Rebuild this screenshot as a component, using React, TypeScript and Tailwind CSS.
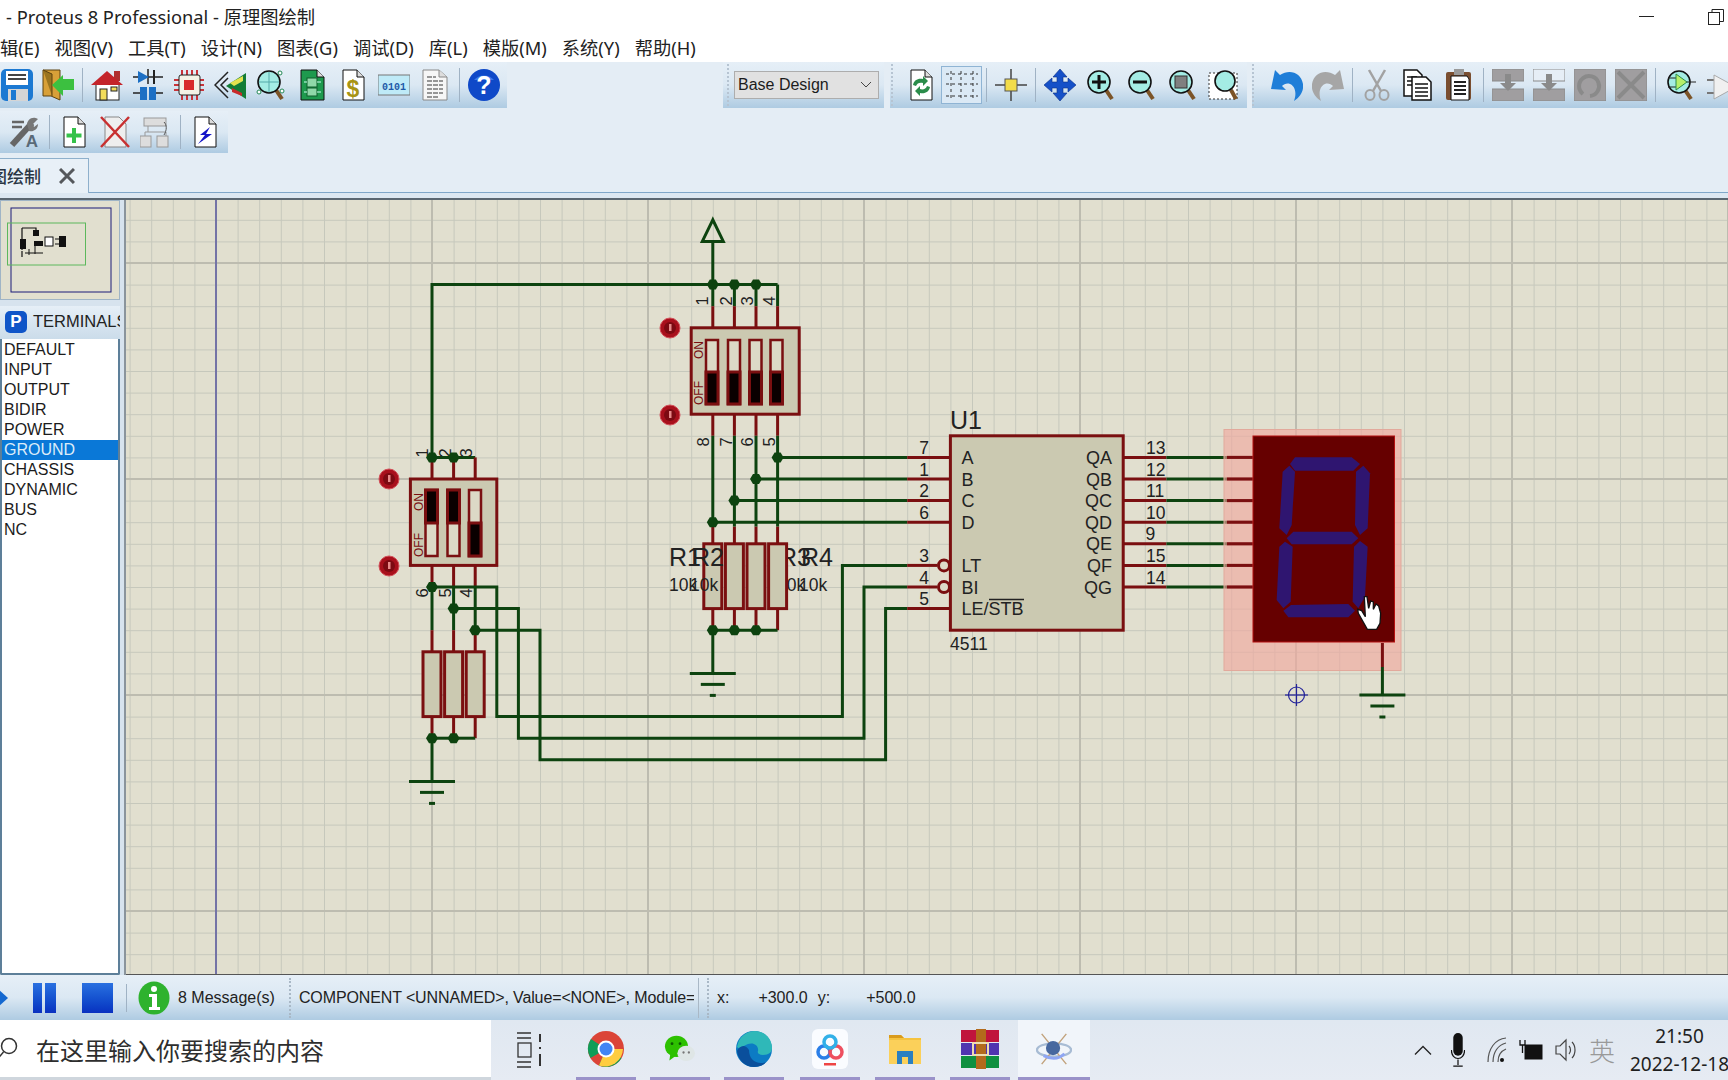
import type { ReactNode } from "react";

const gx = (i: number) => i * 21.6;
const gy = (j: number) => 3.8 + j * 21.6;

const GREEN = "#0d430f";
const RED = "#7a0f10";
const BODY = "#cbc9b1";

type Pt = [number, number];

function Wire({ p, c = GREEN, w = 3 }: { p: Pt[]; c?: string; w?: number }) {
  return (
    <polyline
      points={p.map(([x, y]) => `${gx(x)},${gy(y)}`).join(" ")}
      fill="none"
      stroke={c}
      strokeWidth={w}
    />
  );
}

function Dot({ x, y }: { x: number; y: number }) {
  const cx = gx(x);
  const cy = gy(y);
  return (
    <polygon
      points={`${cx - 6},${cy} ${cx - 3},${cy - 5} ${cx + 3},${cy - 5} ${cx + 6},${cy} ${cx + 3},${cy + 5} ${cx - 3},${cy + 5}`}
      fill={GREEN}
    />
  );
}

function Ground({ x, y }: { x: number; y: number }) {
  const cx = gx(x);
  const cy = gy(y);
  return (
    <g stroke={GREEN} strokeWidth={3}>
      <line x1={cx - 23} x2={cx + 23} y1={cy} y2={cy} />
      <line x1={cx - 12} x2={cx + 12} y1={cy + 11} y2={cy + 11} />
      <line x1={cx - 3} x2={cx + 3} y1={cy + 22} y2={cy + 22} />
    </g>
  );
}

function Resistor({ x, top, bottom }: { x: number; top: number; bottom: number }) {
  return (
    <rect
      x={gx(x) - 9}
      y={gy(top)}
      width={18}
      height={gy(bottom) - gy(top)}
      fill={BODY}
      stroke={RED}
      strokeWidth={3}
    />
  );
}

function Slide({ x, top, bottom, on }: { x: number; top: number; bottom: number; on: boolean }) {
  const mid = (top + bottom) / 2;
  return (
    <g>
      <rect x={x - 6} y={top} width={12} height={bottom - top} fill="#dcd9c6" stroke={RED} strokeWidth={2.5} />
      <rect
        x={x - 6}
        y={on ? top : mid}
        width={12}
        height={(bottom - top) / 2}
        fill="#0a0000"
        stroke={RED}
        strokeWidth={3}
      />
    </g>
  );
}

function Probe({ x, y }: { x: number; y: number }) {
  return (
    <g>
      <circle cx={x} cy={y} r={10} fill="#a8101c" stroke="#d3505a" strokeWidth={1} />
      <circle cx={x} cy={y} r={6} fill="#7c0a12" />
      <path d={`M${x - 1} ${y - 4}h2.5v7h-2.5z`} fill="#e88a8a" />
    </g>
  );
}

function VText({ x, y, size = 16.5, fill = "#222", children }: { x: number; y: number; size?: number; fill?: string; children: ReactNode }) {
  return (
    <text x={x} y={y} fontSize={size} fill={fill} textAnchor="middle" transform={`rotate(-90 ${x} ${y})`}>
      {children}
    </text>
  );
}

function Schematic() {
  const leftLabels: [string, number, string][] = [
    ["7", 21, "A"],
    ["1", 22, "B"],
    ["2", 23, "C"],
    ["6", 24, "D"],
    ["3", 26, "LT"],
    ["4", 27, "BI"],
    ["5", 28, "LE/STB"],
  ];
  const rightLabels: [string, number, string][] = [
    ["13", 21, "QA"],
    ["12", 22, "QB"],
    ["11", 23, "QC"],
    ["10", 24, "QD"],
    ["9", 25, "QE"],
    ["15", 26, "QF"],
    ["14", 27, "QG"],
  ];

  return (
    <svg width={1602} height={774} viewBox="126 200 1602 774" className="block">
      <defs>
        <pattern id="minor" x={0} y={3.8} width={21.6} height={21.6} patternUnits="userSpaceOnUse">
          <rect width={1} height={21.6} fill="#c6c8bc" />
          <rect width={21.6} height={1} fill="#c6c8bc" />
        </pattern>
        <pattern id="major" x={-1} y={46} width={216} height={216} patternUnits="userSpaceOnUse">
          <rect width={2} height={216} fill="#bdbcb0" />
          <rect width={216} height={2} fill="#bdbcb0" />
        </pattern>
      </defs>
      <rect x={126} y={200} width={1602} height={774} fill="#e1dfcf" />
      <rect x={126} y={200} width={1602} height={774} fill="url(#minor)" />
      <rect x={126} y={200} width={1602} height={774} fill="url(#major)" />
      <line x1={216} x2={216} y1={200} y2={974} stroke="#2a2a9c" strokeWidth={1} />

      {/* power terminal and top rail */}
      <polygon
        points={`${gx(33)},${gy(10)} ${gx(33) - 10.5},${gy(11)} ${gx(33) + 10.5},${gy(11)}`}
        fill="none"
        stroke={GREEN}
        strokeWidth={3}
      />
      <Wire p={[[33, 11], [33, 13]]} />
      <Wire p={[[20, 21], [20, 13], [36, 13]]} />

      {/* right DIP pins */}
      {[33, 34, 35, 36].map((x) => (
        <g key={x}>
          <Wire p={[[x, 13], [x, 14]]} />
          <Wire p={[[x, 14], [x, 15]]} c={RED} />
          <Wire p={[[x, 19], [x, 20]]} c={RED} />
          <Wire p={[[x, 28], [x, 29]]} c={RED} />
          <Wire p={[[x, 24.2], [x, 25]]} c={RED} />
        </g>
      ))}
      <Wire p={[[36, 20], [36, 24.2]]} />
      <Wire p={[[35, 20], [35, 24.2]]} />
      <Wire p={[[34, 20], [34, 24.2]]} />
      <Wire p={[[33, 20], [33, 24.2]]} />
      <Wire p={[[33, 29], [36, 29]]} />
      <Wire p={[[33, 29], [33, 31]]} />
      <Ground x={33} y={31} />

      {/* horizontal buses into U1 */}
      <Wire p={[[36, 21], [42, 21]]} />
      <Wire p={[[35, 22], [42, 22]]} />
      <Wire p={[[34, 23], [42, 23]]} />
      <Wire p={[[33, 24], [42, 24]]} />

      {/* left DIP pins */}
      <Wire p={[[20, 21], [22, 21]]} />
      {[20, 21, 22].map((x) => (
        <g key={x}>
          <Wire p={[[x, 21], [x, 22]]} c={RED} />
          <Wire p={[[x, 26], [x, 27]]} c={RED} />
          <Wire p={[[x, 27], [x, 29]]} />
          <Wire p={[[x, 29], [x, 30]]} c={RED} />
          <Wire p={[[x, 33], [x, 34]]} c={RED} />
        </g>
      ))}
      <Wire p={[[20, 34], [21, 34]]} />
      <Wire p={[[21, 34], [22, 34]]} />
      <Wire p={[[20, 34], [20, 36]]} />
      <Ground x={20} y={36} />

      {/* long return wires */}
      <Wire p={[[20, 27], [23, 27], [23, 33], [39, 33], [39, 26], [42, 26]]} />
      <Wire p={[[21, 28], [24, 28], [24, 34], [40, 34], [40, 27], [42, 27]]} />
      <Wire p={[[22, 29], [25, 29], [25, 35], [41, 35], [41, 28], [42, 28]]} />

      {/* U1 pins */}
      {[21, 22, 23, 24, 28].map((j) => (
        <Wire key={j} p={[[42, j], [44, j]]} c={RED} />
      ))}
      {[26, 27].map((j) => (
        <Wire key={j} p={[[42, j], [43.4, j]]} c={RED} />
      ))}
      {[21, 22, 23, 24, 25, 26, 27].map((j) => (
        <g key={j}>
          <Wire p={[[52, j], [54, j]]} c={RED} />
          <Wire p={[[54, j], [56.8, j]]} />
          <Wire p={[[56.8, j], [58, j]]} c={RED} />
        </g>
      ))}

      {/* 4 resistors */}
      <text x={669} y={566} fontSize={25} fill="#222">R1</text>
      <text x={669} y={591} fontSize={17.5} fill="#222">10k</text>
      <Resistor x={33} top={25} bottom={28} />
      <text x={692} y={566} fontSize={25} fill="#222">R2</text>
      <text x={690} y={591} fontSize={17.5} fill="#222">10k</text>
      <Resistor x={34} top={25} bottom={28} />
      <Resistor x={35} top={25} bottom={28} />
      <text x={779} y={566} fontSize={25} fill="#222">R3</text>
      <text x={777} y={591} fontSize={17.5} fill="#222">10k</text>
      <Resistor x={36} top={25} bottom={28} />
      <text x={801} y={566} fontSize={25} fill="#222">R4</text>
      <text x={799} y={591} fontSize={17.5} fill="#222">10k</text>

      {/* left resistors */}
      <Resistor x={20} top={30} bottom={33} />
      <Resistor x={21} top={30} bottom={33} />
      <Resistor x={22} top={30} bottom={33} />

      {/* right DIP body */}
      <rect x={gx(32)} y={gy(15)} width={gx(5)} height={gy(19) - gy(15)} fill={BODY} stroke={RED} strokeWidth={3} />
      <Slide x={712} top={340} bottom={404} on={false} />
      <Slide x={734} top={340} bottom={404} on={false} />
      <Slide x={755.5} top={340} bottom={404} on={false} />
      <Slide x={776.5} top={340} bottom={404} on={false} />
      <VText x={703} y={350} size={12} fill={RED}>ON</VText>
      <VText x={703} y={393} size={12} fill={RED}>OFF</VText>
      <VText x={708} y={301}>1</VText>
      <VText x={731.5} y={301}>2</VText>
      <VText x={752.5} y={301}>3</VText>
      <VText x={775} y={301}>4</VText>
      <VText x={708.5} y={442}>8</VText>
      <VText x={731.5} y={442}>7</VText>
      <VText x={753} y={442}>6</VText>
      <VText x={775} y={442}>5</VText>
      <Probe x={670} y={328} />
      <Probe x={670} y={415} />

      {/* left DIP body */}
      <rect x={gx(19)} y={gy(22)} width={gx(4)} height={gy(26) - gy(22)} fill={BODY} stroke={RED} strokeWidth={3} />
      <Slide x={431.5} top={490} bottom={556} on />
      <Slide x={453.5} top={490} bottom={556} on />
      <Slide x={475} top={490} bottom={556} on={false} />
      <VText x={422.5} y={502} size={12} fill={RED}>ON</VText>
      <VText x={422.5} y={545} size={12} fill={RED}>OFF</VText>
      <VText x={428} y={453}>1</VText>
      <VText x={450.5} y={453}>2</VText>
      <VText x={471.5} y={453}>3</VText>
      <VText x={428} y={593}>6</VText>
      <VText x={450.5} y={593}>5</VText>
      <VText x={471.5} y={593}>4</VText>
      <Probe x={389} y={479} />
      <Probe x={389} y={566} />

      {/* junction dots */}
      {[33, 34, 35].map((x) => (
        <Dot key={x} x={x} y={13} />
      ))}
      {[33, 34, 35].map((x) => (
        <Dot key={x} x={x} y={29} />
      ))}
      <Dot x={36} y={21} />
      <Dot x={35} y={22} />
      <Dot x={34} y={23} />
      <Dot x={33} y={24} />
      <Dot x={20} y={21} />
      <Dot x={21} y={21} />
      <Dot x={20} y={27} />
      <Dot x={21} y={28} />
      <Dot x={22} y={29} />
      <Dot x={20} y={34} />
      <Dot x={21} y={34} />

      {/* U1 */}
      <text x={950} y={429} fontSize={25} fill="#222">U1</text>
      <rect x={gx(44)} y={gy(20)} width={gx(8)} height={gy(29) - gy(20)} fill={BODY} stroke={RED} strokeWidth={3} />
      <circle cx={944} cy={gy(26)} r={5.5} fill="#dddbc8" stroke={RED} strokeWidth={3} />
      <circle cx={944} cy={gy(27)} r={5.5} fill="#dddbc8" stroke={RED} strokeWidth={3} />
      {leftLabels.map(([n, j, l]) => (
        <g key={l}>
          <text x={924} y={gy(j) - 3.5} fontSize={17.5} fill="#222" textAnchor="middle">{n}</text>
          <text x={961.5} y={gy(j) + 6.5} fontSize={18} fill="#222">{l}</text>
        </g>
      ))}
      <line x1={989} x2={1024} y1={599.5} y2={599.5} stroke="#222" strokeWidth={1.5} />
      {rightLabels.map(([n, j, l]) => (
        <g key={l}>
          <text x={n === "9" ? 1145.5 : 1146} y={gy(j) - 3.5} fontSize={17.5} fill="#222">{n}</text>
          <text x={1112} y={gy(j) + 6.5} fontSize={18} fill="#222" textAnchor="end">{l}</text>
        </g>
      ))}
      <text x={950} y={650} fontSize={17.5} fill="#222">4511</text>

      {/* seven segment */}
      <rect x={1224} y={429.5} width={177} height={241} fill="#f0a99f" fillOpacity={0.65} stroke="#e2a99c" />
      {[21, 22, 23, 24, 25, 26, 27].map((j) => (
        <Wire key={j} p={[[56.8, j], [58, j]]} c={RED} />
      ))}
      <rect x={1253} y={436} width={141.5} height={206} fill="#660000" stroke="#b51010" strokeWidth={1} />
      <g transform="translate(930 400) scale(0.33333)" fill="#2f1570">
        <polygon points="1095,172 1265,172 1290,192 1270,212 1095,212 1080,192" />
        <polygon points="1058,215 1078,197 1095,215 1085,375 1070,405 1048,385" />
        <polygon points="1278,215 1300,197 1320,220 1313,385 1290,405 1275,375" />
        <polygon points="1090,395 1265,395 1285,415 1265,433 1085,433 1070,415" />
        <polygon points="1048,440 1065,425 1088,440 1082,605 1060,625 1040,600" />
        <polygon points="1272,440 1290,423 1313,440 1305,590 1285,625 1268,605" />
        <polygon points="1083,615 1255,612 1275,632 1255,652 1075,652 1060,632" />
        <path
          d="M1303 590 L1311 590 L1316 625 L1322 603 L1330 606 L1330 628 L1338 612 L1346 618 L1352 640 L1350 670 L1340 688 L1312 688 L1285 640 L1283 628 L1295 632 L1306 650 Z"
          fill="#fff"
          stroke="#111"
          strokeWidth={4}
        />
      </g>
      <line x1={gx(64)} x2={gx(64)} y1={643} y2={667} stroke={RED} strokeWidth={3} />
      <line x1={gx(64)} x2={gx(64)} y1={667} y2={gy(32)} stroke={GREEN} strokeWidth={3} />
      <Ground x={64} y={32} />

      {/* origin marker */}
      <g stroke="#23239a" strokeWidth={1.2} fill="none">
        <circle cx={1296.5} cy={695} r={8} />
        <line x1={1285} x2={1308} y1={695} y2={695} />
        <line x1={1296.5} x2={1296.5} y1={684} y2={706} />
      </g>
    </svg>
  );
}

/* toolbar icons */

function Ico({ children, w = 32 }: { children: ReactNode; w?: number }) {
  return (
    <svg width={w} height={32} viewBox={`0 0 ${w} 32`} className="block">
      {children}
    </svg>
  );
}

const Sheet = ({ fill = "#fff" }: { fill?: string }) => (
  <>
    <path d="M6 1h14l7 7v23H6z" fill={fill} stroke="#111" strokeWidth={1} />
    <path d="M20 1v7h7" fill="#ddd" stroke="#111" strokeWidth={1} />
  </>
);

const Lens = ({ fill = "#a4ece4" }: { fill?: string }) => (
  <>
    <path d="M21 21l6 9" stroke="#7c5427" strokeWidth={4} />
    <circle cx={14} cy={13} r={11} fill={fill} stroke="#111" strokeWidth={1.6} />
  </>
);

const icons: Record<string, ReactNode> = {
  save: (
    <Ico>
      <rect x={0} y={0} width={32} height={32} rx={5} fill="#1c79d2" />
      <rect x={5} y={2} width={22} height={14} fill="#fff" />
      <path d="M7 6h18M7 10h18" stroke="#444" strokeWidth={2} />
      <rect x={7} y={20} width={20} height={12} fill="#d5d5d5" />
      <rect x={10} y={21} width={5} height={10} fill="#1c79d2" />
    </Ico>
  ),
  exit: (
    <Ico>
      <path d="M1 1h17v30l-9-4H1z" fill="#d8a038" stroke="#5c4210" />
      <path d="M1 1l9 4v22" fill="#9a7420" stroke="#5c4210" />
      <path d="M32 10v11H21v6L10 16l11-10v4z" fill="#3cc040" />
    </Ico>
  ),
  home: (
    <Ico>
      <rect x={23} y={2} width={6} height={10} fill="#b03030" />
      <rect x={5} y={15} width={23} height={16} fill="#fff" stroke="#222" />
      <path d="M0 16L16 2l16 14z" fill="#c4242a" />
      <rect x={9} y={20} width={7} height={11} fill="#f2dc5a" stroke="#222" />
      <rect x={20} y={18} width={6} height={4} fill="#f2dc5a" stroke="#222" />
    </Ico>
  ),
  parts: (
    <Ico>
      <path d="M1 8h30M16 0v15M1 24h12M19 24h12" stroke="#222" strokeWidth={1.5} fill="none" />
      <path d="M6 2l11 6-11 6z" fill="#1c6fc4" />
      <rect x={21} y={1} width={2} height={14} fill="#222" />
      <rect x={8} y={18} width={7} height={13} fill="#1c6fc4" />
      <rect x={17} y={18} width={7} height={13} fill="#1c6fc4" />
    </Ico>
  ),
  chip: (
    <Ico>
      <path d="M9 1v6M14 1v6M19 1v6M24 1v6M9 25v6M14 25v6M19 25v6M24 25v6M1 11h6M1 16h6M1 21h6M25 11h6M25 16h6M25 21h6" stroke="#c8343a" strokeWidth={2} />
      <rect x={6} y={6} width={21} height={20} rx={2} fill="#f4f2e6" stroke="#222" />
      <rect x={11} y={11} width={10} height={10} fill="#d82a2a" />
    </Ico>
  ),
  eye: (
    <Ico>
      <path d="M14 3L1 16l13 13M14 9L7 16l7 7" fill="none" stroke="#222" strokeWidth={1.5} />
      <path d="M32 4v26L12 17z" fill="#137c36" />
      <path d="M16 14l13-7v5l-9 5z" fill="#e4e24e" />
      <path d="M18 19l10 5v3l-10-4z" fill="#c92a2a" />
    </Ico>
  ),
  probe: (
    <Ico>
      <Lens />
      <path d="M14 3v20M4 13h20" stroke="#5aa" strokeWidth={1} />
      <circle cx={4} cy={23} r={2} fill="#fff" stroke="#285" />
      <circle cx={25} cy={4} r={2} fill="#fff" stroke="#285" />
      <circle cx={27} cy={22} r={2} fill="#fff" stroke="#285" />
    </Ico>
  ),
  pcb: (
    <Ico>
      <path d="M5 1h16l7 7v23H5z" fill="#1e9a4e" stroke="#111" />
      <path d="M21 1v7h7" fill="#ddd" stroke="#111" />
      <rect x={11} y={9} width={10} height={9} fill="#8fd8a8" stroke="#0d5c2a" />
      <rect x={11} y={19} width={10} height={8} fill="#8fd8a8" stroke="#0d5c2a" />
      <path d="M8 13h3M21 13h4M8 23h3M21 23h4" stroke="#cfe" />
    </Ico>
  ),
  dollar: (
    <Ico>
      <Sheet />
      <text x={16} y={28} fontSize={23} fontWeight={700} fill="#a89414" textAnchor="middle">$</text>
    </Ico>
  ),
  bin: (
    <Ico>
      <rect x={0} y={6} width={32} height={20} fill="#bfeaf7" stroke="#777" />
      <text x={16} y={21} fontSize={10} fontWeight={700} fill="#1e5aa8" textAnchor="middle" fontFamily="'Liberation Mono', monospace">0101</text>
    </Ico>
  ),
  report: (
    <Ico>
      <path d="M4 1h16l8 7v23H4z" fill="#f6f6f6" stroke="#888" />
      <path d="M20 1v7h8" fill="#ddd" stroke="#888" />
      <path d="M8 8h9M8 12h16M8 16h16M8 20h16M8 24h16M8 28h12" stroke="#777" strokeWidth={1.3} strokeDasharray="5 1" />
    </Ico>
  ),
  help: (
    <Ico>
      <circle cx={16} cy={16} r={16} fill="#0f49c8" />
      <path d="M6 11a12 10 0 0 1 20 0" fill="#3a78ea" />
      <text x={16} y={25} fontSize={25} fontWeight={700} fill="#fff" textAnchor="middle">?</text>
    </Ico>
  ),
  wrench: (
    <Ico>
      <path d="M3 29L23 7" stroke="#666" strokeWidth={6} />
      <path d="M18 8a7 7 0 0 1 11-5l-5 5 1 3 4-3a7 7 0 0 1-9 7z" fill="#777" />
      <path d="M3 6h12M3 11h10" stroke="#666" strokeWidth={2.5} />
      <text x={23} y={31} fontSize={17} fontWeight={700} fill="#5a6a78" textAnchor="middle">A</text>
    </Ico>
  ),
  plus: (
    <Ico>
      <Sheet />
      <path d="M16 12v15M8.500 19.500h15" stroke="#35c24a" strokeWidth={4} />
    </Ico>
  ),
  del: (
    <Ico>
      <path d="M6 1h14l7 7v23H6z" fill="#eee" stroke="#888" />
      <path d="M2 1l28 30M30 1L2 31" stroke="#c83030" strokeWidth={2.5} />
    </Ico>
  ),
  tree: (
    <Ico>
      <rect x={4} y={2} width={22} height={8} fill="#ddd" stroke="#999" />
      <rect x={0} y={20} width={11} height={11} fill="#ddd" stroke="#999" />
      <rect x={17} y={20} width={11} height={11} fill="#ddd" stroke="#999" />
      <path d="M8 10v6h18v4M8 16H5v4" fill="none" stroke="#999" />
      <path d="M24 6c3 3 3 8 0 13" fill="none" stroke="#555" />
    </Ico>
  ),
  bolt: (
    <Ico>
      <Sheet />
      <path d="M21 11L11 19h5l-7 9 14-10h-6z" fill="#1414c8" />
    </Ico>
  ),
  recycle: (
    <Ico>
      <Sheet />
      <path d="M8 16c1-5 5-7 10-6V7l5 5-5 5v-3c-3-1-6 0-7 3z" fill="#2a8c4a" />
      <path d="M25 18c-1 5-5 7-10 6v3l-5-5 5-5v3c3 1 6 0 7-3z" fill="#2a8c4a" />
    </Ico>
  ),
  grid: (
    <Ico>
      <path d="M0 5h32M0 15h32M0 27h32" stroke="#333" strokeWidth={1} strokeDasharray="3 3" />
      <path d="M5 2v28M15 2v28M27 2v28" stroke="#333" strokeWidth={1} strokeDasharray="3 3" />
    </Ico>
  ),
  cross: (
    <Ico>
      <path d="M16 0v32M0 16h32" stroke="#444" strokeWidth={1.5} />
      <rect x={10} y={10} width={12} height={12} fill="#f2dc4a" stroke="#555" />
    </Ico>
  ),
  move: (
    <Ico>
      <path d="M16 0l7 8h-4v5h5V9l8 7-8 7v-4h-5v5h4l-7 8-7-8h4v-5H8v4l-8-7 8-7v4h5V8H9z" fill="#1550c8" stroke="#0b2f88" strokeWidth={0.6} />
    </Ico>
  ),
  zin: (
    <Ico>
      <Lens />
      <path d="M14 6v14M7 13h14" stroke="#111" strokeWidth={3} />
    </Ico>
  ),
  zout: (
    <Ico>
      <Lens />
      <path d="M7 13h14" stroke="#111" strokeWidth={3} />
    </Ico>
  ),
  zfit: (
    <Ico>
      <Lens />
      <rect x={8} y={7} width={12} height={12} fill="#808080" stroke="#333" />
    </Ico>
  ),
  zarea: (
    <Ico>
      <rect x={1} y={4} width={28} height={26} fill="#fff" stroke="#333" strokeDasharray="2 2" />
      <path d="M23 21l5 9" stroke="#7c5427" strokeWidth={4} />
      <circle cx={17} cy={12} r={10} fill="#a4ece4" stroke="#111" strokeWidth={1.6} />
    </Ico>
  ),
  undo: (
    <Ico>
      <path d="M0 20L4 1l5 5c9-6 21-3 23 9 1 7-3 13-9 17 3-8 1-15-4-17-3-1-6 0-8 2l4 4z" fill="#1f7ed8" />
    </Ico>
  ),
  redo: (
    <Ico>
      <path d="M32 20L28 1l-5 5C14 0 2 3 0 15c-1 7 3 13 9 17-3-8-1-15 4-17 3-1 6 0 8 2l-4 4z" fill="#a6a6a6" />
    </Ico>
  ),
  scissors: (
    <Ico>
      <path d="M8 1l12 21M24 1L12 22" stroke="#a2a2a2" strokeWidth={2.5} />
      <ellipse cx={9} cy={26} rx={4.5} ry={5} fill="none" stroke="#a2a2a2" strokeWidth={2} />
      <ellipse cx={23} cy={26} rx={4.5} ry={5} fill="none" stroke="#a2a2a2" strokeWidth={2} />
    </Ico>
  ),
  copy: (
    <Ico>
      <path d="M2 1h13l5 5v21H2z" fill="#fff" stroke="#111" strokeWidth={1.5} />
      <path d="M5 8h10M5 12h10M5 16h10" stroke="#111" strokeWidth={1.5} />
      <path d="M10 8h14l5 5v18H10z" fill="#fff" stroke="#111" strokeWidth={1.5} />
      <path d="M13 15h13M13 19h13M13 23h13M13 27h13" stroke="#111" strokeWidth={1.5} />
    </Ico>
  ),
  paste: (
    <Ico>
      <rect x={3} y={3} width={25} height={28} rx={2} fill="#7a4e30" />
      <rect x={11} y={0} width={10} height={6} fill="#999" />
      <path d="M8 7h16l2 3v21H8z" fill="#fff" stroke="#111" />
      <path d="M11 13h12M11 17h12M11 21h12M11 25h12" stroke="#222" strokeWidth={1.8} />
    </Ico>
  ),
  blockA: (
    <Ico>
      <rect x={0} y={0} width={32} height={12} fill="#a09ea0" stroke="#8a8a8a" />
      <rect x={0} y={20} width={32} height={12} fill="#a09ea0" stroke="#8a8a8a" />
      <path d="M13 5h6v9h5l-8 8-8-8h5z" fill="#8a8a8a" />
    </Ico>
  ),
  blockB: (
    <Ico>
      <rect x={0} y={0} width={32} height={12} fill="#e6eef6" stroke="#8a8a8a" />
      <rect x={0} y={20} width={32} height={12} fill="#a09ea0" stroke="#8a8a8a" />
      <path d="M13 5h6v9h5l-8 8-8-8h5z" fill="#8a8a8a" />
    </Ico>
  ),
  blockC: (
    <Ico>
      <rect x={0} y={0} width={32} height={32} fill="#a09ea0" stroke="#8a8a8a" />
      <path d="M9 25a10 10 0 1 1 7 2" fill="none" stroke="#8a8a8a" strokeWidth={4} />
    </Ico>
  ),
  blockD: (
    <Ico>
      <rect x={0} y={0} width={32} height={32} fill="#a09ea0" stroke="#8a8a8a" />
      <path d="M3 3l26 26M29 3L3 29" stroke="#8a8a8a" strokeWidth={4} />
    </Ico>
  ),
  zsim: (
    <Ico>
      <path d="M19 21l6 9" stroke="#7c5427" strokeWidth={4} />
      <circle cx={13} cy={13} r={11} fill="#a4ece4" stroke="#111" strokeWidth={1.6} />
      <path d="M2 9h8M2 18h8M18 13h12" stroke="#222" />
      <path d="M10 5l11 8-11 8z" fill="#b6f06a" stroke="#2a8c4a" />
    </Ico>
  ),
  amp: (
    <Ico>
      <path d="M0 11h7M0 24h7" stroke="#777" strokeWidth={2} />
      <path d="M7 6l22 12-22 12z" fill="#f0f0f0" stroke="#aaa" />
      <path d="M22 5h10M27 0v11" stroke="#bbb" strokeWidth={3} />
    </Ico>
  ),
};

function Tool({ name, active = false }: { name: string; active?: boolean }) {
  return (
    <div
      className={`w-[41px] h-[38px] flex items-center justify-center shrink-0 ${
        active ? "bg-[#dbe9f5] border border-[#8fb4d4]" : ""
      }`}
    >
      {icons[name]}
    </div>
  );
}

const Sep = () => <div className="w-px h-[34px] bg-[#9fb2c4] mx-[3.5px] shrink-0" />;

const Grip = () => (
  <div className="w-[3px] self-stretch my-[2px] shrink-0 border-l-[2px] border-dotted border-[#b6c4d2]" />
);

const BAR = "bg-gradient-to-b from-[#e6eff7] via-[#dbe8f3] to-[#aecbe2]";

const LIST = ["DEFAULT", "INPUT", "OUTPUT", "BIDIR", "POWER", "GROUND", "CHASSIS", "DYNAMIC", "BUS", "NC"];

const MENU = ["辑(E)", "视图(V)", "工具(T)", "设计(N)", "图表(G)", "调试(D)", "库(L)", "模版(M)", "系统(Y)", "帮助(H)"];

const TASK_ICONS: Record<string, ReactNode> = {
  chrome: (
    <svg width={38} height={38} viewBox="0 0 38 38">
      <circle cx={19} cy={19} r={18} fill="#db4437" />
      <path d="M19 19L3.500 28A18 18 0 0 1 4 9z" fill="#0f9d58" />
      <path d="M19 19l15.500 9A18 18 0 0 1 12 35.500z" fill="#0f9d58" />
      <path d="M19 19h17a18 18 0 0 1-24 16.500z" fill="#ffcd40" />
      <circle cx={19} cy={19} r={8.500} fill="#fff" />
      <circle cx={19} cy={19} r={6.500} fill="#4285f4" />
    </svg>
  ),
  wechat: (
    <svg width={34} height={31} viewBox="0 0 38 35">
      <ellipse cx={15} cy={15} rx={13} ry={12} fill="#2dc100" />
      <path d="M8 24l-1 7 7-5z" fill="#2dc100" />
      <ellipse cx={26} cy={23} rx={10} ry={8.500} fill="#dfe6e6" />
      <circle cx={10} cy={12} r={1.600} fill="#0b5d00" />
      <circle cx={19} cy={12} r={1.600} fill="#0b5d00" />
      <circle cx={23} cy={22} r={1.300} fill="#777" />
      <circle cx={29} cy={22} r={1.300} fill="#777" />
    </svg>
  ),
  edge: (
    <svg width={38} height={38} viewBox="0 0 38 38">
      <circle cx={19} cy={19} r={18} fill="#0c7bc4" />
      <path d="M2 17C4 6 12 1 20 1c9 0 17 7 17 17 0 4-3 7-9 7-4 0-6-2-5-4 1-6-5-9-10-7-5 2-9 6-11 3z" fill="#2fb8b8" />
      <path d="M14 20c0 8 5 13 12 13 2 0 3 0 5-1-3 4-8 5-12 5C10 37 3 30 2 21c2-5 8-8 12-1z" fill="#0a4f9c" />
    </svg>
  ),
  baidu: (
    <svg width={36} height={40} viewBox="0 0 36 40">
      <rect width={36} height={40} rx={6} fill="#fafcff" />
      <circle cx={12} cy={23} r={6} fill="none" stroke="#2b7fe8" strokeWidth={3.500} />
      <circle cx={24} cy={23} r={6} fill="none" stroke="#ee5060" strokeWidth={3.500} />
      <circle cx={18} cy={13} r={6} fill="none" stroke="#31b0e8" strokeWidth={3.500} />
      <rect x={12} y={34} width={12} height={2.500} fill="#e44" />
    </svg>
  ),
  folder: (
    <svg width={36} height={36} viewBox="0 0 36 36">
      <path d="M2 4h12l3 3h17v26H2z" fill="#f5c33f" />
      <path d="M2 4h12l3 3H2z" fill="#d99b1c" />
      <path d="M2 9h32v24H2z" fill="#fbd05a" />
      <path d="M10 20h16v13H10z" fill="#2a7fc0" />
      <rect x={15} y={26} width={6} height={7} fill="#fbd05a" />
    </svg>
  ),
  rar: (
    <svg width={38} height={40} viewBox="0 0 38 40">
      <rect y={1} width={38} height={12} fill="#c0143c" />
      <rect y={14} width={38} height={12} fill="#5034b0" />
      <rect y={27} width={38} height={12} fill="#0f9040" />
      <rect x={15} y={0} width={10} height={40} fill="#b36a1c" />
      <rect x={12} y={14} width={15} height={12} fill="none" stroke="#eddcae" strokeWidth={2} />
    </svg>
  ),
  proteus: (
    <svg width={36} height={36} viewBox="0 0 38 38">
      <ellipse cx={19} cy={20} rx={18} ry={7} fill="none" stroke="#a8bcd4" strokeWidth={2.500} />
      <path d="M6 3l26 32M32 3L6 35" stroke="#c2a27c" strokeWidth={1.500} />
      <circle cx={18} cy={18} r={7.500} fill="#47689f" />
      <path d="M8 26c8 4 16 4 22-2" fill="none" stroke="#8fa6f4" strokeWidth={3} />
    </svg>
  ),
};

function TaskItem({ icon, w = "w-[60px]", on = false }: { icon: string; w?: string; on?: boolean }) {
  return (
    <div
      className={`${w} h-full shrink-0 flex flex-col ${on ? "bg-[#f1f5fa]" : ""}`}
    >
      <div className="flex-1 flex items-center justify-center">{TASK_ICONS[icon]}</div>
      <div className="h-[3px] bg-[#9a92c9]" />
    </div>
  );
}

export default function App() {
  return (
    <div className="w-[1728px] h-[1080px] overflow-hidden flex flex-col bg-[#e4edf5] font-['Liberation_Sans','Noto_Sans_CJK_SC',sans-serif] text-[#1c1c1c]">
      {/* title bar */}
      <div className="h-[32px] bg-white flex items-center justify-between pl-[6px] pr-[4px] pt-px shrink-0">
        <div className="text-[18.3px] font-['Noto_Sans','Noto_Sans_CJK_SC',sans-serif] text-[#222]">
          - Proteus 8 Professional - 原理图绘制
        </div>
        <div className="flex items-center gap-[54px]">
          <div className="w-[15px] h-px bg-[#222]" />
          <svg width={16} height={16} viewBox="0 0 16 16" fill="none" stroke="#222">
            <rect x={0.5} y={3.500} width={11} height={12} fill="#fff" />
            <path d="M4 3V0.500h11.500v12H12" />
          </svg>
        </div>
      </div>

      {/* menu */}
      <div className="h-[30px] bg-white flex items-center gap-[15px] pt-[2px] shrink-0 text-[18.3px] font-['Noto_Sans','Noto_Sans_CJK_SC',sans-serif] text-[#222]">
        {MENU.map((m) => (
          <span key={m}>{m}</span>
        ))}
      </div>

      {/* toolbar row 1 */}
      <div className="h-[46px] flex items-stretch shrink-0">
        <div className={`${BAR} w-[507px] flex items-center`}>
          <div className="flex items-center -ml-[4px]">
            <Tool name="save" />
            <Tool name="exit" />
            <Sep />
            <Tool name="home" />
            <Tool name="parts" />
            <Tool name="chip" />
            <Tool name="eye" />
            <Tool name="probe" />
            <Tool name="pcb" />
            <Tool name="dollar" />
            <Tool name="bin" />
            <Tool name="report" />
            <Sep />
            <Tool name="help" />
          </div>
        </div>
        <div className="w-[216px]" />
        <div className={`${BAR} w-[161px] flex items-center pl-[4px] gap-[4px]`}>
          <Grip />
          <div className="w-[145px] h-[28px] bg-[#e1e1e1] border border-[#adadad] flex items-center justify-between px-[3px] text-[16px]">
            <span>Base Design</span>
            <svg width={12} height={8} viewBox="0 0 12 8" fill="none" stroke="#444" className="mr-[3px]">
              <path d="M1 1l5 5 5-5" />
            </svg>
          </div>
        </div>
        <div className="w-[6px]" />
        <div className={`${BAR} w-[357px] flex items-center pl-[1px] overflow-hidden`}>
          <Grip />
          <div className="w-[6px] shrink-0" />
          <Tool name="recycle" />
          <Tool name="grid" active />
          <Sep />
          <Tool name="cross" />
          <Sep />
          <Tool name="move" />
          <Tool name="zin" />
          <Tool name="zout" />
          <Tool name="zfit" />
          <Tool name="zarea" />
        </div>
        <div className="w-[5px]" />
        <div className={`${BAR} flex-1 flex items-center overflow-hidden`}>
          <Grip />
          <div className="w-[11px] shrink-0" />
          <Tool name="undo" />
          <Tool name="redo" />
          <Sep />
          <Tool name="scissors" />
          <Tool name="copy" />
          <Tool name="paste" />
          <Sep />
          <Tool name="blockA" />
          <Tool name="blockB" />
          <Tool name="blockC" />
          <Tool name="blockD" />
          <Sep />
          <div className="w-[2px] shrink-0" />
          <Tool name="zsim" />
          <Tool name="amp" />
        </div>
      </div>

      {/* toolbar row 2 */}
      <div className="h-[46px] pt-[3px] pb-px shrink-0">
        <div className={`${BAR} w-[228px] h-full flex items-center pl-[4px]`}>
          <Tool name="wrench" />
          <Sep />
          <Tool name="plus" />
          <Tool name="del" />
          <Tool name="tree" />
          <Sep />
          <Tool name="bolt" />
        </div>
      </div>

      {/* tabs */}
      <div className="h-[39px] pt-[4px] border-b border-[#7fa6c8] shrink-0">
        <div className="w-[89px] h-[35px] bg-[#e8f0f7] border border-b-0 border-l-0 border-[#8eb0cc] flex items-center overflow-hidden">
          <span className="text-[17px] font-medium whitespace-nowrap text-[#2a3644] -ml-[10px] font-['Noto_Sans_CJK_SC',sans-serif]">图绘制</span>
          <svg width={16} height={16} viewBox="0 0 16 16" className="ml-[18px] shrink-0" stroke="#55585c" strokeWidth={3}>
            <path d="M1 1l14 14M15 1L1 15" />
          </svg>
        </div>
      </div>
      <div className="h-[7px] bg-[#dce7f1] border-b-2 border-[#5a6670] shrink-0" />

      {/* main */}
      <div className="h-[775px] flex shrink-0 bg-[#d7e3ee]">
        <div className="w-[120px] shrink-0 flex flex-col">
          <div className="h-[100px] bg-[#e1dfcf] border border-[#9fb4c6] shrink-0 overflow-hidden">
            <svg width={120} height={100} viewBox="0 200 120 100" className="block">
              <rect x={10} y={207} width={100} height={84} fill="none" stroke="#1b1b78" strokeWidth={1} />
              <rect x={6.500} y={222} width={78} height={42} fill="none" stroke="#5cb85c" strokeWidth={1} />
              <path d="M21 227h14v4M21 227v22M21 250v6M24 252h18" stroke="#111" strokeWidth={1.200} fill="none" />
              <rect x={19} y={238} width={6} height={10} fill="#111" />
              <rect x={32} y={229} width={6} height={6} fill="#111" />
              <path d="M33 240h9v5h-9z" fill="#111" />
              <rect x={44} y={236} width={8} height={9} fill="#fff" stroke="#111" />
              <rect x={58} y={235} width={7} height={11} fill="#111" />
              <path d="M54 238h4M54 243h4M22 243h2M34 245v8M28 248v6" stroke="#111" />
            </svg>
          </div>
          <div className="h-[6px] shrink-0" />
          <div className="h-[33px] shrink-0 flex items-center gap-[6px] pl-[5px] pb-[2px] overflow-hidden bg-gradient-to-b from-[#e6eff7] to-[#cbdcea]">
            <div className="w-[22px] h-[22px] rounded-[5px] bg-[#0f55c8] text-white text-[17px] font-bold flex items-center justify-center shrink-0">
              P
            </div>
            <span className="text-[16.5px] text-[#222]">TERMINALS</span>
          </div>
          <div className="flex-1 bg-white border-2 border-[#5d7f99] border-t-0 pt-px rounded-b-[2px]">
            {LIST.map((t) => (
              <div
                key={t}
                className={`h-[20px] leading-[20px] text-[16px] pl-[2px] ${
                  t === "GROUND" ? "bg-[#0a78d7] text-[#dcecf9]" : "text-[#1c1c1c]"
                }`}
              >
                {t}
              </div>
            ))}
          </div>
        </div>
        <div className="w-[6px] shrink-0 border-r-2 border-[#8a949c]" />
        <div className="flex-1 overflow-hidden border-b border-[#555]">
          <Schematic />
        </div>
      </div>

      {/* status bar */}
      <div className={`${BAR} h-[45px] shrink-0 flex items-center pt-px text-[16px] text-[#222] overflow-hidden`}>
        <svg width={8} height={18} viewBox="0 0 8 18" className="shrink-0">
          <path d="M-2 0l10 9-10 9z" fill="#1468d0" />
        </svg>
        <div className="flex gap-[3px] ml-[25px]">
          <div className="w-[9px] h-[30px] bg-gradient-to-b from-[#2a70e0] to-[#0a30c0]" />
          <div className="w-[11px] h-[30px] bg-gradient-to-b from-[#2a70e0] to-[#0a30c0]" />
        </div>
        <div className="w-[31px] h-[30px] ml-[26px] bg-gradient-to-b from-[#2a70e0] to-[#0a30c0]" />
        <div className="w-px h-[28px] bg-[#9fb2c4] ml-[13px]" />
        <svg width={32} height={34} viewBox="0 0 32 34" className="ml-[11px] shrink-0">
          <ellipse cx={16} cy={17} rx={15.500} ry={16.500} fill="#2eb22e" />
          <circle cx={16} cy={8} r={3} fill="#fff" />
          <path d="M11 13h8v13h3v3H11v-3h3V16h-3z" fill="#fff" />
        </svg>
        <span className="ml-[8px] whitespace-nowrap">8 Message(s)</span>
        <div className="ml-[14px] mr-[8px]">
          <div className="w-[2px] h-[40px] border-l-[2px] border-dotted border-[#a9b8c6]" />
        </div>
        <div className="w-[395px] overflow-hidden whitespace-nowrap tracking-[-0.12px]">
          {"COMPONENT <UNNAMED>, Value=<NONE>, Module=<NONE>"}
        </div>
        <div className="w-px h-[40px] bg-[#a9b8c6] ml-[4px]" />
        <div className="w-[2px] h-[40px] ml-[8px] border-l-[2px] border-dotted border-[#a9b8c6]" />
        <span className="ml-[8px]">x:</span>
        <span className="ml-[29px]">+300.0</span>
        <span className="ml-[10px]">y:</span>
        <span className="ml-[36px]">+500.0</span>
      </div>

      {/* taskbar */}
      <div className="h-[60px] shrink-0 flex items-center bg-gradient-to-b from-[#e0e8f1] to-[#e6ebf3] overflow-hidden">
        <div className="w-[491px] h-full shrink-0 flex flex-col">
          <div className="h-[57px] bg-white flex items-center">
            <svg width={22} height={24} viewBox="0 0 22 24" fill="none" stroke="#333" strokeWidth={1.500} className="shrink-0 -ml-[3px]">
              <circle cx={12} cy={9} r={7.500} />
              <path d="M6.500 15l-6 7" />
            </svg>
            <span className="ml-[17px] pt-[3px] text-[24px] text-[#2e2e2e] font-['Noto_Sans_CJK_SC',sans-serif] whitespace-nowrap">
              在这里输入你要搜索的内容
            </span>
          </div>
          <div className="h-[3px] bg-[#cfd6dd]" />
        </div>
        <div className="w-[85px] h-full shrink-0 flex items-center pl-[26px]">
          <svg width={25} height={38} viewBox="0 0 25 38" fill="none" stroke="#333" strokeWidth={1.300}>
            <path d="M0 2h14M0 7h14M0 31h14M0 36h14" />
            <rect x={1} y={12} width={13} height={14} />
            <path d="M23 3v8M23 16v2M23 23v12" strokeWidth={2} />
          </svg>
        </div>
        <TaskItem icon="chrome" />
        <div className="w-[14px]" />
        <TaskItem icon="wechat" />
        <div className="w-[14px]" />
        <TaskItem icon="edge" />
        <div className="w-[16px]" />
        <TaskItem icon="baidu" />
        <div className="w-[15px]" />
        <TaskItem icon="folder" />
        <div className="w-[15px]" />
        <TaskItem icon="rar" />
        <div className="w-[8px]" />
        <TaskItem icon="proteus" w="w-[72px]" on />
        <div className="flex-1 h-full flex items-center pl-[324px] gap-[23px] relative">
          <svg width={18} height={10} viewBox="0 0 18 10" fill="none" stroke="#222" strokeWidth={1.300} className="shrink-0">
            <path d="M1 9.500l8-8 8 8" />
          </svg>
          <svg width={14} height={34} viewBox="0 0 14 36" className="shrink-0 -ml-[4px]">
            <rect x={2} y={0} width={10} height={24} rx={5} fill="#111" />
            <path d="M0 18c0 12 14 12 14 0M7 28v6M2 35h10" fill="none" stroke="#111" strokeWidth={1.300} />
          </svg>
          <svg width={20} height={26} viewBox="0 0 20 26" fill="none" stroke="#555" strokeWidth={1.200} className="shrink-0 -ml-[1px]">
            <path d="M1 25C1 12 8 2 19 1M6 25C6 15 11 8 19 6M11 25c0-6 3-11 8-13" />
            <circle cx={15} cy={23} r={2} fill="#111" stroke="none" />
          </svg>
          <svg width={24} height={22} viewBox="0 0 24 22" className="shrink-0 -ml-[11px]">
            <rect x={6} y={6} width={17} height={14} fill="#111" stroke="#111" />
            <path d="M1 1v5h5V1M3.500 6v8" fill="none" stroke="#111" strokeWidth={1.300} />
          </svg>
          <svg width={22} height={24} viewBox="0 0 22 24" fill="none" stroke="#444" strokeWidth={1.200} className="shrink-0 -ml-[11px]">
            <path d="M1 8h4l6-6v20l-6-6H1zM14 8c2 2 2 6 0 8M17 4c4 4 4 12 0 16" />
          </svg>
          <span className="text-[26px] leading-none text-[#999] font-['Noto_Sans_CJK_SC',sans-serif] font-light -ml-[11px]">英</span>
          <div className="absolute right-[-1px] top-0 h-full w-[99px] flex flex-col items-center justify-center text-[19px] leading-[28px] font-['Noto_Sans',sans-serif] text-[#1f1f1f] whitespace-nowrap">
            <span>21:50</span>
            <span>2022-12-18</span>
          </div>
        </div>
      </div>
    </div>
  );
}
